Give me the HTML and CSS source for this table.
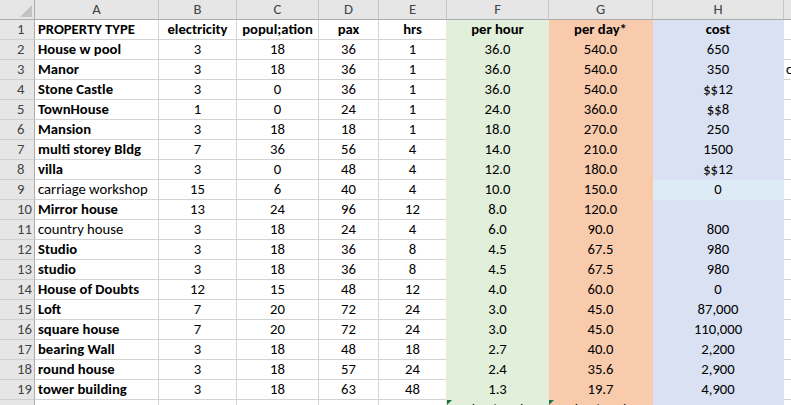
FILE: index.html
```html
<!DOCTYPE html>
<html>
<head>
<meta charset="utf-8">
<link rel="stylesheet" href="styles.css">
</head>
<body>
<div class="sheet">
  <div class="hd corner"><svg width="34" height="19" viewBox="0 0 34 19"><polygon points="32,5 32,17 20,17" fill="#c3c3c3"/></svg></div>
  <div class="hd">A</div><div class="hd">B</div><div class="hd">C</div><div class="hd">D</div><div class="hd">E</div><div class="hd">F</div><div class="hd">G</div><div class="hd">H</div><div class="hd last">I</div>

  <div class="rh">1</div><div class="c name b">PROPERTY TYPE</div><div class="c b">electricity</div><div class="c b">popul;ation</div><div class="c b">pax</div><div class="c e b">hrs</div><div class="c f b">per hour</div><div class="c g b">per day*</div><div class="c h b">cost</div><div class="c i"></div>
  <div class="rh">2</div><div class="c name b">House w pool</div><div class="c">3</div><div class="c">18</div><div class="c">36</div><div class="c e">1</div><div class="c f">36.0</div><div class="c g">540.0</div><div class="c h">650</div><div class="c i"></div>
  <div class="rh">3</div><div class="c name b">Manor</div><div class="c">3</div><div class="c">18</div><div class="c">36</div><div class="c e">1</div><div class="c f">36.0</div><div class="c g">540.0</div><div class="c h">350</div><div class="c i">comment</div>
  <div class="rh">4</div><div class="c name b">Stone Castle</div><div class="c">3</div><div class="c">0</div><div class="c">36</div><div class="c e">1</div><div class="c f">36.0</div><div class="c g">540.0</div><div class="c h">$$12</div><div class="c i"></div>
  <div class="rh">5</div><div class="c name b">TownHouse</div><div class="c">1</div><div class="c">0</div><div class="c">24</div><div class="c e">1</div><div class="c f">24.0</div><div class="c g">360.0</div><div class="c h">$$8</div><div class="c i"></div>
  <div class="rh">6</div><div class="c name b">Mansion</div><div class="c">3</div><div class="c">18</div><div class="c">18</div><div class="c e">1</div><div class="c f">18.0</div><div class="c g">270.0</div><div class="c h">250</div><div class="c i"></div>
  <div class="rh">7</div><div class="c name b">multi storey Bldg</div><div class="c">7</div><div class="c">36</div><div class="c">56</div><div class="c e">4</div><div class="c f">14.0</div><div class="c g">210.0</div><div class="c h">1500</div><div class="c i"></div>
  <div class="rh">8</div><div class="c name b">villa</div><div class="c">3</div><div class="c">0</div><div class="c">48</div><div class="c e">4</div><div class="c f">12.0</div><div class="c g">180.0</div><div class="c h">$$12</div><div class="c i"></div>
  <div class="rh">9</div><div class="c name">carriage workshop</div><div class="c">15</div><div class="c">6</div><div class="c">40</div><div class="c e">4</div><div class="c f">10.0</div><div class="c g">150.0</div><div class="c h2">0</div><div class="c i"></div>
  <div class="rh">10</div><div class="c name b">Mirror house</div><div class="c">13</div><div class="c">24</div><div class="c">96</div><div class="c e">12</div><div class="c f">8.0</div><div class="c g">120.0</div><div class="c h"></div><div class="c i"></div>
  <div class="rh">11</div><div class="c name">country house</div><div class="c">3</div><div class="c">18</div><div class="c">24</div><div class="c e">4</div><div class="c f">6.0</div><div class="c g">90.0</div><div class="c h">800</div><div class="c i"></div>
  <div class="rh">12</div><div class="c name b">Studio</div><div class="c">3</div><div class="c">18</div><div class="c">36</div><div class="c e">8</div><div class="c f">4.5</div><div class="c g">67.5</div><div class="c h">980</div><div class="c i"></div>
  <div class="rh">13</div><div class="c name b">studio</div><div class="c">3</div><div class="c">18</div><div class="c">36</div><div class="c e">8</div><div class="c f">4.5</div><div class="c g">67.5</div><div class="c h">980</div><div class="c i"></div>
  <div class="rh">14</div><div class="c name b">House of Doubts</div><div class="c">12</div><div class="c">15</div><div class="c">48</div><div class="c e">12</div><div class="c f">4.0</div><div class="c g">60.0</div><div class="c h">0</div><div class="c i"></div>
  <div class="rh">15</div><div class="c name b">Loft</div><div class="c">7</div><div class="c">20</div><div class="c">72</div><div class="c e">24</div><div class="c f">3.0</div><div class="c g">45.0</div><div class="c h">87,000</div><div class="c i"></div>
  <div class="rh">16</div><div class="c name b">square house</div><div class="c">7</div><div class="c">20</div><div class="c">72</div><div class="c e">24</div><div class="c f">3.0</div><div class="c g">45.0</div><div class="c h">110,000</div><div class="c i"></div>
  <div class="rh">17</div><div class="c name b">bearing Wall</div><div class="c">3</div><div class="c">18</div><div class="c">48</div><div class="c e">18</div><div class="c f">2.7</div><div class="c g">40.0</div><div class="c h">2,200</div><div class="c i"></div>
  <div class="rh">18</div><div class="c name b">round house</div><div class="c">3</div><div class="c">18</div><div class="c">57</div><div class="c e">24</div><div class="c f">2.4</div><div class="c g">35.6</div><div class="c h">2,900</div><div class="c i"></div>
  <div class="rh">19</div><div class="c name b">tower building</div><div class="c">3</div><div class="c">18</div><div class="c">63</div><div class="c e">48</div><div class="c f">1.3</div><div class="c g">19.7</div><div class="c h">4,900</div><div class="c i"></div>
  <div class="rh">20</div><div class="c name"></div><div class="c"></div><div class="c"></div><div class="c"></div><div class="c e"></div><div class="c f err">hrs/total</div><div class="c g err">hrs/total</div><div class="c h"></div><div class="c i"></div>
</div>
</body>
</html>
```
FILE: styles.css
```css
html, body {
  margin: 0;
  padding: 0;
  background: #ffffff;
  overflow: hidden;
}
.sheet {
  display: grid;
  grid-template-columns: 35px 124px 78px 82px 60px 68px 102px 104px 131px 120px;
  grid-auto-rows: 20px;
  font-family: "Carlito", "Lato", "Liberation Sans", sans-serif;
  font-size: 14.67px;
  color: #000000;
  width: 904px;
}
.hd {
  box-sizing: border-box;
  background: #e6e6e6;
  border-right: 1px solid #c6c6c6;
  border-bottom: 1px solid #ababab;
  color: #444444;
  text-align: center;
  line-height: 19px;
}
.corner {
  border-right-color: #ababab;
  line-height: 0;
}
.rh {
  box-sizing: border-box;
  background: #e6e6e6;
  border-right: 1px solid #ababab;
  border-bottom: 1px solid #d0d0d0;
  color: #444444;
  text-align: left;
  padding-left: 17px;
  line-height: 19px;
}
.c {
  box-sizing: border-box;
  border-right: 1px solid #d4d4d4;
  border-bottom: 1px solid #d4d4d4;
  line-height: 19px;
  text-align: center;
  white-space: nowrap;
  overflow: hidden;
  position: relative;
}
.b { font-weight: 700; }
.name {
  text-align: left;
  padding-left: 3px;
}
.e { border-right-color: #e2efda; }
.f { background: #e2efda; border-color: #e2efda; }
.g { background: #f8cbad; border-color: #f8cbad; }
.h { background: #d9e1f2; border-color: #d9e1f2; }
.h2 { background: #ddebf7; border-color: #ddebf7; }
.i {
  text-align: left;
  padding-left: 2px;
}
.err::before {
  content: "";
  position: absolute;
  left: 0;
  top: 0;
  border-top: 5px solid #1e7145;
  border-right: 5px solid transparent;
}
```
